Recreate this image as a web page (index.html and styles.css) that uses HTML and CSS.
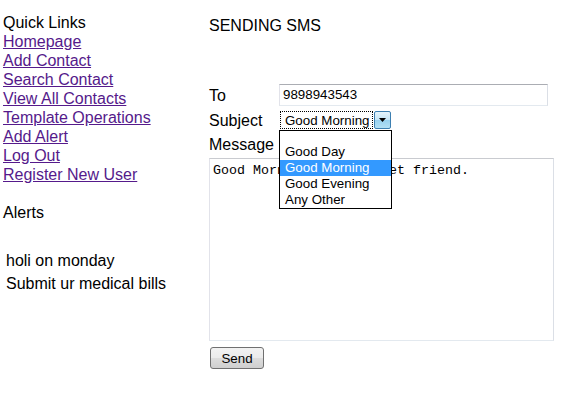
FILE: index.html
```html
<!DOCTYPE html>
<html>
<head>
<meta charset="utf-8">
<title>Sending SMS</title>
<link rel="stylesheet" href="styles.css">
</head>
<body>
<div class="page">
  <div class="sidebar">
    <div class="quick">
      <div class="line">Quick Links</div>
      <a class="line link" href="#">Homepage</a>
      <a class="line link" href="#">Add Contact</a>
      <a class="line link" href="#">Search Contact</a>
      <a class="line link" href="#">View All Contacts</a>
      <a class="line link" href="#">Template Operations</a>
      <a class="line link" href="#">Add Alert</a>
      <a class="line link" href="#">Log Out</a>
      <a class="line link" href="#">Register New User</a>
    </div>
    <div class="alerts-title line">Alerts</div>
    <ul class="alerts">
      <li>holi on monday</li>
      <li>Submit ur medical bills</li>
    </ul>
  </div>
  <div class="main">
    <div class="title line">SENDING SMS</div>
    <div class="form">
      <div class="row row-to">
        <div class="label">To</div>
        <div class="textbox">9898943543</div>
      </div>
      <div class="row row-subject">
        <div class="label">Subject</div>
        <div class="select">
          <div class="select-value"><span>Good Morning</span></div>
          <div class="select-btn"><svg width="7" height="4" viewBox="0 0 7 4"><path d="M0 0h7L3.5 4z" fill="#000"/></svg></div>
          <ul class="dropdown">
            <li class="opt blank">&nbsp;</li>
            <li class="opt">Good Day</li>
            <li class="opt sel">Good Morning</li>
            <li class="opt">Good Evening</li>
            <li class="opt">Any Other</li>
          </ul>
        </div>
      </div>
      <div class="row row-msg">
        <div class="label">Message</div>
      </div>
      <textarea class="message" readonly>Good Morning to my sweet friend.</textarea>
      <div class="actions">
        <button class="send" type="button">Send</button>
      </div>
    </div>
  </div>
</div>
</body>
</html>
```
FILE: styles.css
```css
html, body {
  margin: 0;
  padding: 0;
  background: #fff;
}
body {
  font-family: "Liberation Sans", Arial, sans-serif;
  font-size: 16px;
  color: #000;
}
.page {
  display: flex;
  align-items: flex-start;
}
.sidebar {
  width: 206px;
  padding: 13px 0 0 3px;
}
.line {
  display: block;
  line-height: 19px;
  height: 19px;
  white-space: nowrap;
}
.link {
  color: #551a8b;
  text-decoration: underline;
  width: max-content;
}
.alerts-title {
  margin-top: 19px;
}
.alerts {
  list-style: none;
  margin: 26px 0 0 0;
  padding: 0 0 0 3px;
}
.alerts li {
  line-height: 23px;
  height: 23px;
  padding-top: 1px;
  box-sizing: border-box;
  white-space: nowrap;
}
.main {
  flex: 1;
  padding-top: 16px;
}
.form {
  margin-top: 49px;
  display: flex;
  flex-direction: column;
}
.row {
  display: flex;
  align-items: flex-start;
}
.label {
  width: 70px;
  line-height: 19px;
}
.row-to {
  height: 26px;
}
.row-to .label {
  padding-top: 2px;
}
.textbox {
  width: 269px;
  height: 22px;
  box-sizing: border-box;
  border: 1px solid;
  border-color: #abadb3 #dbdfe6 #e3e9ef #e2e3ea;
  font-size: 13.33px;
  line-height: 20px;
  padding-left: 3px;
}
.row-subject {
  height: 25px;
}
.row-subject .label {
  padding-top: 1px;
}
.select {
  position: relative;
  width: 113px;
  height: 20px;
  box-sizing: border-box;
  display: flex;
  font-size: 13.33px;
  background: #fff;
  padding: 1px;
}
.select-value {
  flex: 1;
  border: 1px dotted #000;
  line-height: 17px;
  padding-left: 4px;
  white-space: nowrap;
  overflow: hidden;
}
.select-btn {
  width: 15px;
  margin-left: 1px;
  border: 1px solid #3c7fb1;
  border-radius: 2px;
  background: linear-gradient(#e5f4fc, #c4e5f6 50%, #98d1ef 51%, #b3e0f5);
  display: flex;
  align-items: center;
  justify-content: center;
}
.dropdown {
  position: absolute;
  top: 20px;
  left: 0;
  width: 113px;
  box-sizing: border-box;
  margin: 0;
  padding: 0;
  list-style: none;
  border: 1px solid #000;
  background: #fff;
  z-index: 5;
}
.opt {
  height: 16px;
  line-height: 16px;
  padding-left: 5px;
  white-space: nowrap;
}
.opt.blank {
  height: 13px;
}
.opt.sel {
  background: #3399ff;
  color: #fff;
}
.row-msg {
  height: 23px;
}
.message {
  display: block;
  width: 345px;
  height: 183px;
  box-sizing: border-box;
  margin: 0;
  border: 1px solid;
  border-color: #c9cbd0 #dbdfe6 #e3e9ef #e2e3ea;
  padding: 4px 3px 2px 3px;
  font-family: "Liberation Mono", "Courier New", monospace;
  font-size: 13.33px;
  line-height: 15px;
  resize: none;
  overflow: hidden;
  outline: none;
  color: #000;
}
.actions {
  margin-top: 6px;
}
.send {
  margin: 0 0 0 1px;
  width: 54px;
  height: 22px;
  border: 1px solid #707070;
  border-radius: 3px;
  background: linear-gradient(#f2f2f2, #ebebeb 50%, #dddddd 51%, #cfcfcf);
  font-family: "Liberation Sans", Arial, sans-serif;
  font-size: 13.33px;
  color: #000;
  padding: 0;
}
```
